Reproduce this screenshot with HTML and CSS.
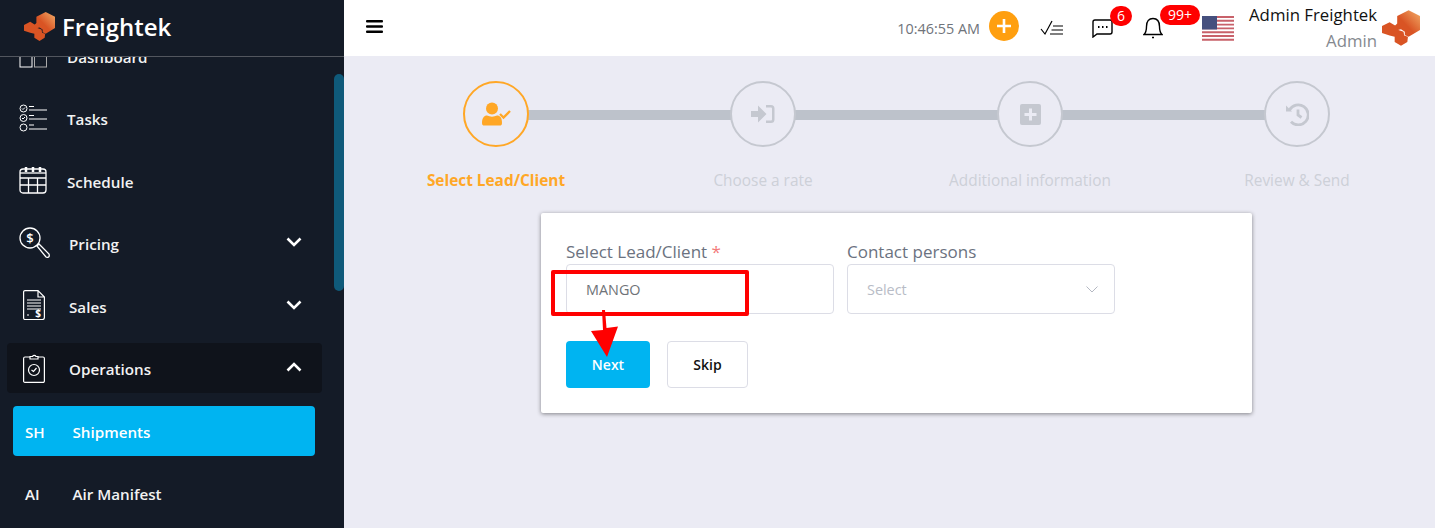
FILE: index.html
```html
<!DOCTYPE html>
<html lang="en">
<head>
    <meta charset="UTF-8">
    <title>Freightek</title>
    <link rel="stylesheet" href="styles.css">
</head>
<body>
    <svg class="defs" width="0" height="0">
        <defs>
            <linearGradient id="logoGrad" x1="0" y1="1" x2="1" y2="0">
                <stop offset="0.45" stop-color="#d95424"/>
                <stop offset="1" stop-color="#f2ad68"/>
            </linearGradient>
            <symbol id="logo" viewBox="0 0 30 28">
                <path fill="url(#logoGrad)" d="M21 0l9 4.500v11L21 21l-3-1.500V17l-3-2-4 1-1-3.500 2-2V4.500z"/>
                <path fill="#d95424" d="M6 9.500l5 3 2 3 4 1.500 .5 3 3 1-.5 4-5 3-5-3v-4l-4-1L0 18v-5.500z"/>
            </symbol>
        </defs>
    </svg>

    <div class="app">
        <!-- Sidebar -->
        <aside class="sidebar">
            <div class="brand">
                <svg class="brand-logo" width="31" height="29"><use href="#logo"/></svg>
                <span>Freightek</span>
            </div>
            <nav class="menu">
                <a class="menu-item">
                    <svg class="menu-icon" width="28" height="28" viewBox="0 0 28 28" fill="none" stroke="#fff"><rect x="1" y="2" width="12" height="24"/><rect x="15.500" y="14" width="12" height="12" stroke="#aaa"/></svg>
                    <span class="menu-label">Dashboard</span>
                </a>
                <a class="menu-item">
                    <svg class="menu-icon" width="28" height="28" viewBox="0 0 28 28" fill="none" stroke="#fff"><circle cx="4.500" cy="4.500" r="3.500"/><circle cx="4.500" cy="14" r="3.500"/><circle cx="4.500" cy="23.500" r="3.500"/><path d="M3 4.500l1 1 2-2M3 14l1 1 2-2M10 2.500h5M10 6h18M10 11.500h5M10 15h18M10 21h5M10 25h18"/></svg>
                    <span class="menu-label">Tasks</span>
                </a>
                <a class="menu-item">
                    <svg class="menu-icon" width="28" height="28" viewBox="0 0 28 28" fill="none" stroke="#fff" stroke-width="1.300"><rect x="1" y="3" width="26" height="24" rx="3"/><path d="M1 12h26M1 19h26M9.500 12v15M18.500 12v15"/><path d="M7 1v5M14 1v5M21 1v5" stroke-width="2.500"/><path d="M1 7h26"/></svg>
                    <span class="menu-label">Schedule</span>
                </a>
                <a class="menu-item menu-pricing">
                    <svg class="menu-icon" width="31" height="31" viewBox="0 0 31 31" fill="none" stroke="#fff" stroke-width="1.300"><circle cx="11" cy="11" r="10"/><path d="M18 19l2-2 10 10c1 3-1 4-3 3z"/><text x="11" y="16" font-size="13" font-family="Open Sans" font-weight="600" fill="#fff" stroke="none" text-anchor="middle">$</text></svg>
                    <span class="menu-label">Pricing</span>
                    <svg class="chevron" width="16" height="10" viewBox="0 0 16 10" fill="none" stroke="#fff" stroke-width="2.600"><path d="M1.500 1.500L8 8l6.500-6.500"/></svg>
                </a>
                <a class="menu-item menu-sub">
                    <svg class="menu-icon" width="22" height="30" viewBox="0 0 22 30" fill="none" stroke="#fff" stroke-width="1.200"><path d="M2 .600h13l6.400 6.400v20.500a2 2 0 0 1-2 2H2a1.400 1.400 0 0 1-1.400-1.400V2A1.400 1.400 0 0 1 2 .600zM15 .600V7h6.400"/><path d="M4 10h14M4 13h14M4 16h14M4 19h14M4 25h2"/><text x="15" y="27" font-size="10" font-family="Open Sans" font-weight="700" fill="#fff" stroke="none" text-anchor="middle">$</text></svg>
                    <span class="menu-label">Sales</span>
                    <svg class="chevron" width="16" height="10" viewBox="0 0 16 10" fill="none" stroke="#fff" stroke-width="2.600"><path d="M1.500 1.500L8 8l6.500-6.500"/></svg>
                </a>
                <a class="menu-item menu-sub menu-open">
                    <svg class="menu-icon" width="22" height="30" viewBox="0 0 22 30" fill="none" stroke="#fff" stroke-width="1.200"><path d="M7 4H2a1.400 1.400 0 0 0-1.400 1.400v23A1.400 1.400 0 0 0 2 29.400h18a1.400 1.400 0 0 0 1.400-1.400V5.400A1.400 1.400 0 0 0 20 4h-5"/><path d="M7 6V3.500h2.500a2 2 0 0 1 3.500 0H15V6z"/><circle cx="11" cy="17" r="5.500"/><path d="M8.500 17l2 1.500 3-3.500"/></svg>
                    <span class="menu-label">Operations</span>
                    <svg class="chevron" width="16" height="10" viewBox="0 0 16 10" fill="none" stroke="#fff" stroke-width="2.600"><path d="M1.500 8.500L8 2l6.500 6.500"/></svg>
                </a>
                <a class="submenu-item active"><span class="abbr">SH</span><span>Shipments</span></a>
                <a class="submenu-item"><span class="abbr">AI</span><span>Air Manifest</span></a>
            </nav>
            <div class="scroll-thumb"></div>
        </aside>

        <div class="content">
            <!-- Top bar -->
            <header class="topbar">
                <svg class="burger" width="17" height="13" viewBox="0 0 17 13" fill="#000"><rect width="17" height="2.600" rx="1"/><rect y="5.200" width="17" height="2.600" rx="1"/><rect y="10.400" width="17" height="2.600" rx="1"/></svg>
                <div class="topbar-right">
                    <span class="clock">10:46:55 AM</span>
                    <span class="add-btn">
                        <svg width="16" height="16" viewBox="0 0 16 16" stroke="#fff" stroke-width="2.600"><path d="M8 1v14M1 8h14"/></svg>
                    </span>
                    <svg class="icon-todo" width="24" height="16" viewBox="0 0 24 16" fill="none" stroke="#000" stroke-width="1.200"><path d="M1 9l4 5 7-13M13 6h10M11.500 10h11.500M10 14h13"/></svg>
                    <span class="notify icon-chat">
                        <svg width="21" height="20" viewBox="0 0 21 20" fill="none" stroke="#000" stroke-width="1.400"><path d="M3 2h15a2 2 0 0 1 2 2v10a2 2 0 0 1-2 2H5l-4 3V4a2 2 0 0 1 2-2z"/><path d="M6 9h1.500M10 9h1.500M14 9h1.500" stroke-width="2"/></svg>
                        <span class="badge">6</span>
                    </span>
                    <span class="notify icon-bell">
                        <svg width="20" height="22" viewBox="0 0 20 22" fill="none" stroke="#000" stroke-width="1.400"><path d="M1 17.500h18c-2-2-2.500-3.500-2.500-8C16.500 4 14 1.500 10 1.500S3.500 4 3.500 9.500c0 4.500-.5 6-2.500 8zM9 20.500h2"/></svg>
                        <span class="badge badge-wide">99+</span>
                    </span>
                    <svg class="flag" width="32" height="25" viewBox="0 0 32 25">
                        <rect width="32" height="25" fill="#fff"/>
                        <path stroke="#c8616a" stroke-width="1.900" d="M0 1h32M0 4.800h32M0 8.600h32M0 12.400h32M0 16.200h32M0 20h32M0 23.800h32"/>
                        <rect width="15" height="13.500" fill="#46507e"/>
                    </svg>
                    <div class="user">
                        <div class="user-name">Admin Freightek</div>
                        <div class="user-role">Admin</div>
                    </div>
                    <svg class="user-logo" width="38" height="38"><use href="#logo"/></svg>
                </div>
            </header>

            <main class="main">
                <!-- Steps -->
                <div class="steps">
                    <div class="step current">
                        <div class="step-circle">
                            <svg width="30" height="24" viewBox="0 0 30 24" fill="#ffa726"><circle cx="11" cy="6.500" r="6"/><path d="M1 21c0-6 3-7.500 5-7.500 3 1.500 7 1.500 10 0 3 0 5 2 5 7.500 0 2-1 2.500-2 2.500H3c-1 0-2-.500-2-2.500z"/><path d="M19 12l3.500 3.500L29 9" fill="none" stroke="#ffa726" stroke-width="2.300"/></svg>
                        </div>
                        <div class="step-label">Select Lead/Client</div>
                    </div>
                    <div class="step">
                        <div class="step-circle">
                            <svg width="24" height="20" viewBox="0 0 24 20" fill="#c5c8d0"><path d="M0 7h7V1.500L15.500 10 7 18.500V13H0z"/><path d="M15 1h5a3.500 3.500 0 0 1 3.500 3.500v11A3.500 3.500 0 0 1 20 19h-5v-2.500h5a1 1 0 0 0 1-1v-11a1 1 0 0 0-1-1h-5z"/></svg>
                        </div>
                        <div class="step-label">Choose a rate</div>
                    </div>
                    <div class="step">
                        <div class="step-circle">
                            <svg width="21" height="21" viewBox="0 0 21 21"><rect width="21" height="21" rx="2" fill="#c5c8d0"/><path d="M10.500 4.500v12M4.500 10.500h12" stroke="#ebebf4" stroke-width="3"/></svg>
                        </div>
                        <div class="step-label">Additional information</div>
                    </div>
                    <div class="step">
                        <div class="step-circle">
                            <svg width="24" height="23" viewBox="0 0 24 23" fill="none" stroke="#c5c8d0" stroke-width="2.800"><path d="M4.500 7A10 10 0 1 1 6 18.800"/><path d="M1 2.500V8.500h6z" fill="#c5c8d0" stroke="none"/><path d="M13 6.500v5.500l3.500 2.500"/></svg>
                        </div>
                        <div class="step-label">Review &amp; Send</div>
                    </div>
                </div>

                <!-- Form -->
                <div class="form-card">
                    <div class="fields">
                        <div class="field">
                            <label class="field-label">Select Lead/Client <span class="req">*</span></label>
                            <div class="control">MANGO</div>
                        </div>
                        <div class="field">
                            <label class="field-label">Contact persons</label>
                            <div class="control placeholder">
                                Select
                                <svg width="12" height="7" viewBox="0 0 12 7" fill="none" stroke="#b4b8c2"><path d="M.5.500L6 6l5.500-5.500"/></svg>
                            </div>
                        </div>
                    </div>
                    <div class="actions">
                        <button class="btn btn-next">Next</button>
                        <button class="btn btn-skip">Skip</button>
                    </div>
                    <div class="mark-box"></div>
                    <svg class="mark-arrow" width="30" height="50" viewBox="0 0 30 50" fill="#f00"><path d="M11 0h3l1.500 18 11.500-1.500L16 47 0 21l12-1z"/></svg>
                </div>
            </main>
        </div>
    </div>
</body>
</html>
```

FILE: styles.css
```css
* {
    box-sizing: border-box;
}
html, body {
    margin: 0;
    height: 100%;
    overflow: hidden;
}
body {
    font-family: "Open Sans", "Noto Sans", sans-serif;
    background-color: #ebebf4;
}
.defs {
    position: absolute;
}
.app {
    display: flex;
    height: 528px;
}

/* Sidebar */
.sidebar {
    position: relative;
    width: 344px;
    flex-shrink: 0;
    background-color: #141b27;
    color: #f2f2f2;
    overflow: hidden;
}
.brand {
    position: relative;
    z-index: 1;
    display: flex;
    align-items: center;
    height: 57px;
    padding-left: 24px;
    padding-bottom: 3px;
    gap: 7px;
    background-color: #141b27;
    border-bottom: 1px solid #52565e;
    font-size: 24px;
    font-weight: 600;
    color: #fff;
}
.menu {
    display: flex;
    flex-direction: column;
    gap: 12.5px;
    margin-top: -26.4px;
}
.menu-item {
    display: flex;
    align-items: center;
    height: 50px;
    width: 315px;
    margin-left: 7px;
    padding: 2px 20px 0 12px;
    border-radius: 4px;
    font-size: 15.2px;
    font-weight: 600;
}
.menu-icon {
    flex-shrink: 0;
    margin-top: -3px;
}
.menu-label {
    margin-left: 20px;
}
.menu-pricing .menu-label {
    margin-left: 19px;
}
.menu-sub {
    padding-left: 16px;
}
.menu-sub .menu-label {
    margin-left: 24px;
}
.menu-open {
    background-color: #0f131b;
}
.chevron {
    margin-left: auto;
    margin-top: -4px;
}
.submenu-item {
    display: flex;
    align-items: center;
    height: 50px;
    width: 302px;
    margin-left: 13px;
    padding: 2px 0 0 12px;
    border-radius: 4px;
    font-size: 15.2px;
    font-weight: 600;
}
.submenu-item.active {
    background-color: #00b4f1;
    color: #fff;
}
.abbr {
    width: 47.500px;
}
.scroll-thumb {
    position: absolute;
    top: 74px;
    right: 0;
    width: 10px;
    height: 217px;
    border-radius: 5px;
    background-color: #0f5a7a;
}

/* Top bar */
.content {
    flex: 1;
    min-width: 0;
}
.topbar {
    display: flex;
    align-items: center;
    justify-content: space-between;
    height: 56px;
    padding-left: 22px;
    padding-right: 15px;
    background-color: #fff;
}
.burger {
    margin-top: -3px;
}
.topbar-right {
    display: flex;
    align-items: center;
}
.clock {
    font-size: 14.4px;
    font-weight: 500;
    color: #6f737a;
    margin-right: 9px;
}
.add-btn {
    display: flex;
    align-items: center;
    justify-content: center;
    width: 30px;
    height: 30px;
    border-radius: 50%;
    background-color: #ff9f0f;
    margin-top: -4px;
}
.icon-todo {
    margin-left: 21px;
}
.notify {
    position: relative;
    display: flex;
}
.icon-chat {
    margin-left: 28px;
}
.icon-bell {
    margin-left: 30px;
}
.badge {
    position: absolute;
    top: -12px;
    left: 18px;
    min-width: 22px;
    height: 20px;
    padding: 0 5px;
    border-radius: 10px;
    background-color: #f00;
    color: #fff;
    font-size: 14px;
    line-height: 20px;
    text-align: center;
}
.badge-wide {
    left: 17px;
    width: 40px;
}
.flag {
    margin-left: 39px;
}
.user {
    width: 128px;
    margin-left: 15px;
    text-align: right;
    font-size: 16.8px;
    line-height: 26px;
}
.user-name {
    color: #111;
    white-space: nowrap;
}
.user-role {
    color: #85898f;
}
.user-logo {
    margin-left: 5px;
}

/* Stepper */
.main {
    padding-top: 25px;
}
.steps {
    display: grid;
    grid-template-columns: repeat(4, 267px);
    margin-left: 18.500px;
}
.step {
    position: relative;
    display: flex;
    flex-direction: column;
    align-items: center;
}
.step:not(:last-child)::after {
    content: "";
    position: absolute;
    top: 29px;
    left: 50%;
    width: 100%;
    height: 10px;
    background-color: #bdc2cb;
}
.step-circle {
    position: relative;
    z-index: 1;
    display: flex;
    align-items: center;
    justify-content: center;
    width: 66px;
    height: 66px;
    border: 2px solid #c5c8d0;
    border-radius: 50%;
    background-color: #ebebf4;
}
.step-label {
    margin-top: 23px;
    font-size: 15.4px;
    line-height: 22px;
    color: #cdd0d8;
    white-space: nowrap;
}
.step.current .step-circle {
    border-color: #ffa726;
}
.step.current .step-label {
    color: #ffa726;
    font-weight: 700;
}

/* Form card */
.form-card {
    position: relative;
    width: 711px;
    height: 200px;
    margin-top: 21px;
    margin-left: 197px;
    padding: 25px;
    background-color: #fff;
    border-radius: 2px;
    box-shadow: 0 1px 4px rgba(0, 0, 0, 0.45);
}
.fields {
    display: flex;
    gap: 13px;
}
.field {
    width: 268px;
}
.field-label {
    display: block;
    padding-top: 2px;
    font-size: 17px;
    font-weight: 500;
    line-height: 24px;
    color: #6b7280;
}
.req {
    color: #f37a7a;
}
.control {
    display: flex;
    align-items: center;
    justify-content: space-between;
    height: 50px;
    padding: 0 16px 0 19px;
    border: 1px solid #dcdde6;
    border-radius: 4px;
    font-size: 14.4px;
    color: #6f7378;
}
.placeholder {
    color: #b8bcc6;
}
.actions {
    display: flex;
    gap: 17px;
    margin-top: 27px;
}
.btn {
    height: 47px;
    border-radius: 4px;
    font-family: inherit;
    font-size: 14px;
    font-weight: 600;
}
.btn-next {
    width: 84px;
    border: none;
    background-color: #00b4f1;
    color: #fff;
}
.btn-skip {
    width: 81px;
    border: 1px solid #dcdde6;
    background-color: #fff;
    color: #111;
}

/* Red annotation drawn over the form */
.mark-box {
    position: absolute;
    top: 57px;
    left: 10px;
    width: 198px;
    height: 46px;
    border: 4px solid #f00;
    border-radius: 2px;
}
.mark-arrow {
    position: absolute;
    top: 97px;
    left: 50px;
}
```
